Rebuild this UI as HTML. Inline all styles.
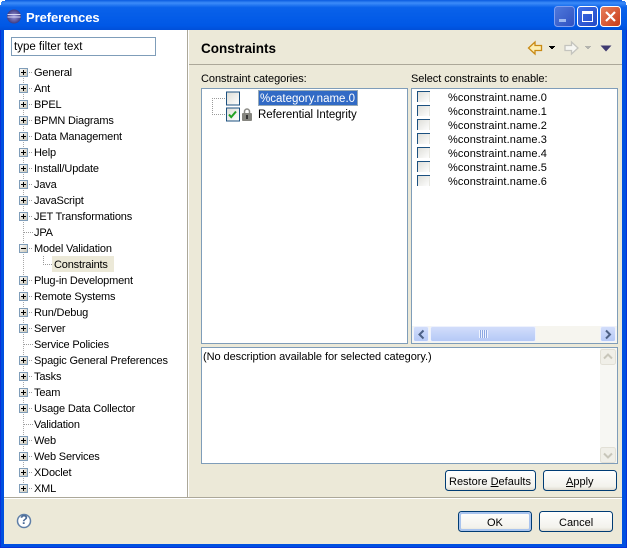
<!DOCTYPE html>
<html><head><meta charset="utf-8"><title>Preferences</title>
<style>
html,body{margin:0;padding:0;background:#fff;}
#w{position:relative;width:627px;height:548px;overflow:hidden;font:11px "Liberation Sans",sans-serif;color:#000;}
svg{position:absolute;left:0;top:0;}
.t{position:absolute;white-space:nowrap;line-height:14px;height:14px;margin-top:1px;}
.r{letter-spacing:-.17px;}
.n{letter-spacing:.1px;}
.l{letter-spacing:-.06px;}
.u{text-decoration:underline;}
</style></head><body><div id="w">
<svg width="627" height="548" viewBox="0 0 627 548" shape-rendering="crispEdges">
<defs>
<linearGradient id="tb" x1="0" y1="0" x2="0" y2="1"><stop offset="0" stop-color="#0a5be0"/><stop offset=".1" stop-color="#3c8cf8"/><stop offset=".25" stop-color="#0a62ea"/><stop offset=".85" stop-color="#0058e6"/><stop offset="1" stop-color="#004fd8"/></linearGradient>
<linearGradient id="ex" x1="0" y1="0" x2="1" y2="1"><stop offset="0" stop-color="#fff"/><stop offset="1" stop-color="#c6c2b2"/></linearGradient>
<linearGradient id="cb" x1="0" y1="0" x2="1" y2="1"><stop offset="0" stop-color="#dcdcd6"/><stop offset="1" stop-color="#fff"/></linearGradient>
<linearGradient id="btn" x1="0" y1="0" x2="0" y2="1"><stop offset="0" stop-color="#fff"/><stop offset=".8" stop-color="#f3f2ec"/><stop offset="1" stop-color="#dcd8cc"/></linearGradient>
<linearGradient id="sb" x1="0" y1="0" x2="0" y2="1"><stop offset="0" stop-color="#d3defb"/><stop offset="1" stop-color="#b4c8f6"/></linearGradient>
<linearGradient id="min" x1="0" y1="0" x2="1" y2="1"><stop offset="0" stop-color="#4f79dc"/><stop offset="1" stop-color="#2f50c0"/></linearGradient>
<linearGradient id="max" x1="0" y1="0" x2="1" y2="1"><stop offset="0" stop-color="#3f6fe8"/><stop offset="1" stop-color="#2348c4"/></linearGradient>
<linearGradient id="cl" x1="0" y1="0" x2="1" y2="1"><stop offset="0" stop-color="#e8805c"/><stop offset="1" stop-color="#c83a18"/></linearGradient>
<radialGradient id="ec" cx=".5" cy=".5" r=".6"><stop offset="0" stop-color="#9a96dc"/><stop offset="1" stop-color="#2c2a70"/></radialGradient>
<g id="p"><rect x="19.5" y="-3.5" width="8" height="8" fill="url(#ex)" stroke="#7f9db9"/><path d="M21 0.5h5M23.5 -2v5" stroke="#000" fill="none"/><path d="M29 0.5h4" stroke="#9a9a9a" stroke-dasharray="1 1"/></g>
<g id="c"><rect x=".5" y=".5" width="13" height="13" fill="url(#cb)" stroke="#1c5180"/></g>
</defs>

<!-- window frame -->
<rect width="627" height="548" fill="#0050e0"/>
<path d="M0 0h627v30H0z" fill="url(#tb)"/>
<path d="M0 0h5v1H2v1H1v3H0z" fill="#fff"/><path d="M627 0h-5v1h3v1h1v3h1z" fill="#fff"/>
<rect x="0" y="30" width="1" height="518" fill="#0831d9"/>
<rect x="626" y="30" width="1" height="518" fill="#0831d9"/>
<rect x="4" y="30" width="618" height="514" fill="#ece9d8"/>
<rect x="0" y="547" width="627" height="1" fill="#0831d9"/>

<!-- title icon -->
<g shape-rendering="auto"><circle cx="14" cy="16.5" r="7" fill="url(#ec)"/><path d="M7.500 14.500h13M7.500 17h13" stroke="#d8d8f4" stroke-width=".9"/></g>

<!-- title buttons -->
<g shape-rendering="auto">
<rect x="554.500" y="6.500" width="20" height="20" rx="3" fill="url(#min)" stroke="#7f9ff0"/>
<rect x="559" y="19" width="7" height="3" fill="#9db8f0"/>
<rect x="577.500" y="6.500" width="20" height="20" rx="3" fill="url(#max)" stroke="#fff"/>
<path d="M582.500 11.500h10v10h-10z" fill="none" stroke="#fff"/><rect x="582" y="11" width="11" height="3" fill="#fff"/>
<rect x="600.500" y="6.500" width="20" height="20" rx="3" fill="url(#cl)" stroke="#fff"/>
<path d="M606 12l9 9M615 12l-9 9" stroke="#fff" stroke-width="2.200"/>
</g>

<!-- left panel -->
<rect x="4" y="30" width="183" height="467" fill="#fff"/>
<rect x="187" y="30" width="1" height="467" fill="#aca899"/>
<rect x="188" y="30" width="1" height="467" fill="#fff"/>
<rect x="4" y="497" width="618" height="1" fill="#aca899"/>
<rect x="4" y="498" width="618" height="1" fill="#fff"/>
<rect x="11.500" y="37.500" width="144" height="18" fill="#fff" stroke="#7f9db9"/>

<!-- tree lines -->
<path d="M23.500 72V488" stroke="#a8a8a8" stroke-dasharray="1 1"/>
<path d="M43.500 256V264M43 264.500h9" stroke="#9a9a9a" stroke-dasharray="1 1" fill="none"/>
<path d="M24 232.500h9M24 344.500h9M24 424.500h9" stroke="#9a9a9a" stroke-dasharray="1 1"/>
<rect x="52" y="256" width="62" height="16" fill="#ece9d8"/>
<use href="#p" x="0" y="72"/><use href="#p" x="0" y="88"/><use href="#p" x="0" y="104"/><use href="#p" x="0" y="120"/>
<use href="#p" x="0" y="136"/><use href="#p" x="0" y="152"/><use href="#p" x="0" y="168"/><use href="#p" x="0" y="184"/>
<use href="#p" x="0" y="200"/><use href="#p" x="0" y="216"/>
<g transform="translate(0,248)"><rect x="19.500" y="-3.500" width="8" height="8" fill="url(#ex)" stroke="#7f9db9"/><path d="M21 0.500h5" stroke="#000"/><path d="M29 0.500h4" stroke="#9a9a9a" stroke-dasharray="1 1"/></g>
<use href="#p" x="0" y="280"/><use href="#p" x="0" y="296"/><use href="#p" x="0" y="312"/><use href="#p" x="0" y="328"/>
<use href="#p" x="0" y="360"/><use href="#p" x="0" y="376"/><use href="#p" x="0" y="392"/><use href="#p" x="0" y="408"/>
<use href="#p" x="0" y="440"/><use href="#p" x="0" y="456"/><use href="#p" x="0" y="472"/><use href="#p" x="0" y="488"/>

<!-- header -->
<rect x="189" y="64" width="433" height="1" fill="#aca899"/>
<g shape-rendering="auto">
<path d="M528.500 48l6.500-6v3.500h6.500v5H535v3.500z" fill="#fdeeb0" stroke="#c98a14" stroke-width="1.300"/>
<path d="M578 48l-6.500-6v3.500H565v5h6.500v3.500z" fill="#f6f6f2" stroke="#c4c4be" stroke-width="1.300"/>
</g>
<path d="M549 46h6v1h-1v1h-1v1h-2v-1h-1v-1h-1z" fill="#000"/>
<path d="M585 46h6v1h-1v1h-1v1h-2v-1h-1v-1h-1z" fill="#b4b4ae"/>
<g shape-rendering="auto"><path d="M600.500 45.500h11l-5.500 6z" fill="#3f3a70"/></g>

<!-- category list -->
<rect x="201.500" y="88.500" width="206" height="255" fill="#fff" stroke="#7f9db9"/>
<path d="M212.500 98V114M212 98.500h14M212 114.500h14" stroke="#9a9a9a" stroke-dasharray="1 1" fill="none"/>
<use href="#c" x="226" y="91.500"/>
<use href="#c" x="226" y="107.500"/>
<g shape-rendering="auto"><path d="M229 114.500l2.200 2.600 4.800-5.600" fill="none" stroke="#21a121" stroke-width="2"/>
<path d="M244.500 113.500v-2a2.500 2.500 0 0 1 5 0v2" fill="none" stroke="#8a8a86" stroke-width="1.500"/><rect x="242" y="113" width="10" height="8" rx="1" fill="#85857f"/><rect x="246" y="115" width="2" height="4" fill="#333"/></g>
<rect x="258" y="90" width="100" height="16" fill="#316ac5"/>
<rect x="258.500" y="90.500" width="99" height="15" fill="none" stroke="#ffe9a8" stroke-dasharray="1 1"/>

<!-- constraints list -->
<rect x="411.500" y="88.500" width="206" height="255" fill="#fff" stroke="#7f9db9"/>
<g fill="url(#cb)">
<rect x="417" y="91" width="13" height="11"/><rect x="417" y="105" width="13" height="11"/><rect x="417" y="119" width="13" height="11"/><rect x="417" y="133" width="13" height="11"/><rect x="417" y="147" width="13" height="11"/><rect x="417" y="161" width="13" height="11"/><rect x="417" y="175" width="13" height="11"/>
</g>
<path d="M417.500 102V91.500H430M417.500 116V105.500H430M417.500 130V119.500H430M417.500 144V133.500H430M417.500 158V147.500H430M417.500 172V161.500H430M417.500 186V175.500H430" fill="none" stroke="#1c5180"/>
<path d="M429.500 92V102M429.500 106V116M429.500 120V130M429.500 134V144M429.500 148V158M429.500 162V172M429.500 176V186" stroke="#e8e8e2"/>

<!-- h scrollbar -->
<rect x="412" y="326" width="205" height="17" fill="#f6f5ef"/>
<g shape-rendering="auto">
<rect x="413.500" y="326.500" width="15" height="15" rx="2" fill="url(#sb)" stroke="#eef2fd"/>
<path d="M423.500 330.500l-4 4 4 4" fill="none" stroke="#4d6185" stroke-width="2"/>
<rect x="600.500" y="326.500" width="15" height="15" rx="2" fill="url(#sb)" stroke="#eef2fd"/>
<path d="M606 330.500l4 4-4 4" fill="none" stroke="#4d6185" stroke-width="2"/>
<rect x="430.500" y="326.500" width="105" height="15" rx="2" fill="url(#sb)" stroke="#eef2fd"/>
</g>
<path d="M479.500 330v8M481.500 330v8M483.500 330v8M485.500 330v8M487.500 330v8" stroke="#eef3ff"/>
<path d="M480.500 330v8M482.500 330v8M484.500 330v8M486.500 330v8" stroke="#8ca8e2"/>

<!-- description -->
<rect x="201.500" y="347.500" width="416" height="116" fill="#fff" stroke="#7f9db9"/>
<rect x="600" y="348" width="17" height="115" fill="#f7f7f3"/>
<g shape-rendering="auto">
<rect x="600.500" y="349.500" width="15" height="15" rx="2" fill="#f0efe8" stroke="#e2e0d6"/>
<path d="M604 358.500l4-4 4 4" fill="none" stroke="#c8c6ba" stroke-width="2"/>
<rect x="600.500" y="447.500" width="15" height="15" rx="2" fill="#f0efe8" stroke="#e2e0d6"/>
<path d="M604 453.500l4 4 4-4" fill="none" stroke="#c8c6ba" stroke-width="2"/>
<!-- buttons -->
<rect x="445.500" y="470.500" width="90" height="20" rx="3" fill="url(#btn)" stroke="#003c74"/>
<rect x="543.500" y="470.500" width="73" height="20" rx="3" fill="url(#btn)" stroke="#003c74"/>
<rect x="458.500" y="511.500" width="73" height="20" rx="3" fill="url(#btn)" stroke="#003c74"/>
<rect x="460" y="513" width="70" height="17" rx="2" fill="none" stroke="#a9c4ee" stroke-width="2"/>
<rect x="539.500" y="511.500" width="73" height="20" rx="3" fill="url(#btn)" stroke="#003c74"/>
<circle cx="24" cy="521" r="6.500" fill="#fff" stroke="#5f7fa8" stroke-width="1.500"/>
</g>
</svg>

<div class="t" style="left:26px;top:10px;margin:0;font-size:13px;font-weight:bold;color:#fff;line-height:15px;height:15px;letter-spacing:-.08px">Preferences</div>
<div class="t" style="left:14px;top:39px;font-size:11.500px">type filter text</div>

<div class="t r" style="left:34px;top:65px">General</div>
<div class="t r" style="left:34px;top:81px">Ant</div>
<div class="t r" style="left:34px;top:97px">BPEL</div>
<div class="t r" style="left:34px;top:113px">BPMN Diagrams</div>
<div class="t r" style="left:34px;top:129px">Data Management</div>
<div class="t r" style="left:34px;top:145px">Help</div>
<div class="t r" style="left:34px;top:161px">Install/Update</div>
<div class="t r" style="left:34px;top:177px">Java</div>
<div class="t r" style="left:34px;top:193px">JavaScript</div>
<div class="t r" style="left:34px;top:209px">JET Transformations</div>
<div class="t r" style="left:34px;top:225px">JPA</div>
<div class="t r" style="left:34px;top:241px">Model Validation</div>
<div class="t r" style="left:54px;top:257px">Constraints</div>
<div class="t r" style="left:34px;top:273px">Plug-in Development</div>
<div class="t r" style="left:34px;top:289px">Remote Systems</div>
<div class="t r" style="left:34px;top:305px">Run/Debug</div>
<div class="t r" style="left:34px;top:321px">Server</div>
<div class="t r" style="left:34px;top:337px">Service Policies</div>
<div class="t r" style="left:34px;top:353px">Spagic General Preferences</div>
<div class="t r" style="left:34px;top:369px">Tasks</div>
<div class="t r" style="left:34px;top:385px">Team</div>
<div class="t r" style="left:34px;top:401px">Usage Data Collector</div>
<div class="t r" style="left:34px;top:417px">Validation</div>
<div class="t r" style="left:34px;top:433px">Web</div>
<div class="t r" style="left:34px;top:449px">Web Services</div>
<div class="t r" style="left:34px;top:465px">XDoclet</div>
<div class="t r" style="left:34px;top:481px">XML</div>

<div class="t" style="left:201px;top:41px;margin:0;font-size:13.500px;font-weight:bold;line-height:15px;height:15px">Constraints</div>
<div class="t l" style="left:201px;top:71px">Constraint categories:</div>
<div class="t l" style="left:411px;top:71px">Select constraints to enable:</div>

<div class="t" style="left:260px;top:91px;color:#fff;font-size:11.500px">%category.name.0</div>
<div class="t" style="left:258px;top:107px;font-size:11.500px;letter-spacing:-.05px">Referential Integrity</div>

<div class="t n" style="left:448px;top:90px">%constraint.name.0</div>
<div class="t n" style="left:448px;top:104px">%constraint.name.1</div>
<div class="t n" style="left:448px;top:118px">%constraint.name.2</div>
<div class="t n" style="left:448px;top:132px">%constraint.name.3</div>
<div class="t n" style="left:448px;top:146px">%constraint.name.4</div>
<div class="t n" style="left:448px;top:160px">%constraint.name.5</div>
<div class="t n" style="left:448px;top:174px">%constraint.name.6</div>

<div class="t l" style="left:203px;top:349px">(No description available for selected category.)</div>

<div class="t" style="left:449px;top:474px">Restore <span class="u">D</span>efaults</div>
<div class="t" style="left:566px;top:474px"><span class="u">A</span>pply</div>
<div class="t" style="left:487px;top:515px">OK</div>
<div class="t" style="left:559px;top:515px">Cancel</div>
<div class="t" style="left:20px;top:513px;margin:0;font-weight:bold;font-size:13px;color:#4a6a96">?</div>
</div></body></html>
